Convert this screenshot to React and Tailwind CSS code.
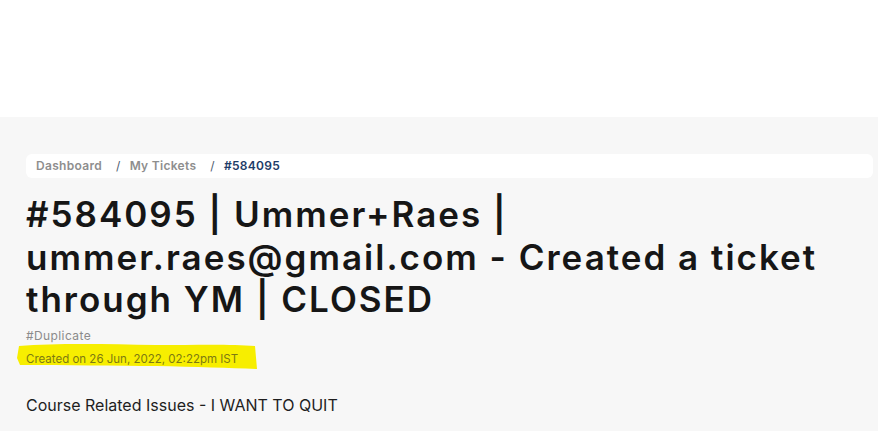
import React from 'react';

const crumbs = [
  { label: 'Dashboard', active: false },
  { label: 'My Tickets', active: false },
  { label: '#584095', active: true },
];

const Highlight = () => (
  <svg
    className="absolute left-[-10px] top-[-9px] w-[242px] h-[28px] pointer-events-none"
    viewBox="0 0 242 28"
    preserveAspectRatio="none"
  >
    <path
      d="M3 4 C40 1 90 2 140 3 C180 3 215 2 239 4 L241 27 C215 26 180 25 140 24 C100 24 50 23 4 23 L1 16 Z"
      fill="#f7ee00"
    />
  </svg>
);

const App = () => {
  return (
    <div className="min-h-screen bg-white" style={{ fontFamily: 'Inter, "Noto Sans", sans-serif' }}>
      <div className="h-[117px] bg-white" />
      <div className="bg-[#f7f7f7] min-h-[314px] pl-[26px] pr-[5px] pt-[37px]">
        <nav className="bg-white rounded-md h-[24px] flex items-center px-[10px] text-[12px] font-semibold tracking-[0.3px]">
          {crumbs.map((c, i) => (
            <React.Fragment key={c.label}>
              {i > 0 && <span className="text-[#4d5b70] ml-[14px] mr-[9px] font-normal">/</span>}
              <span className={c.active ? 'text-[#1d3c68]' : 'text-[#8e8e8e]'}>{c.label}</span>
            </React.Fragment>
          ))}
        </nav>

        <h1 className="mt-[15px] text-[35px] leading-[42.5px] font-semibold text-[#161616] max-w-[845px] tracking-[2px]">
          #584095 | Ummer+Raes | ummer.raes@gmail.com - Created a ticket through YM | CLOSED
        </h1>

        <div className="mt-[7px] text-[12px] leading-[16px] text-[#8b8b8b] tracking-[0.4px]">#Duplicate</div>
        <div className="relative mt-[7px] text-[11.5px] leading-[16px] text-[#7d7a12] inline-block">
          <Highlight />
          <span className="relative">Created on 26 Jun, 2022, 02:22pm IST</span>
        </div>

        <p className="mt-[25px] text-[16px] leading-[22px] text-[#1e1e1e]">
          Course Related Issues - I WANT TO QUIT
        </p>
      </div>
    </div>
  );
};

export default App;
